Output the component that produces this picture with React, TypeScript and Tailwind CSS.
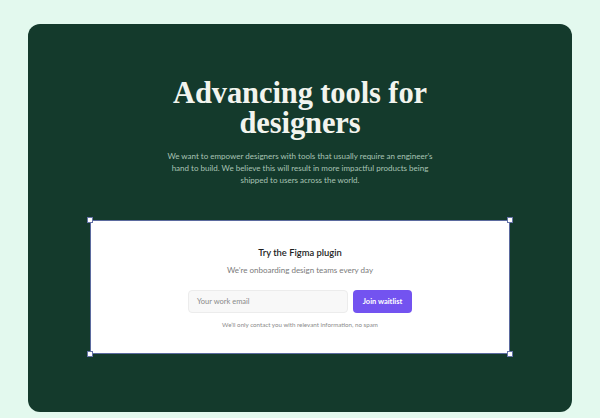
import React from "react";

function Handle({ pos }: { pos: string }) {
  return (
    <div
      className={`absolute w-[6px] h-[6px] bg-white border border-[#6673a8] ${pos}`}
    />
  );
}

export default function App() {
  return (
    <div className="w-[600px] h-[418px] bg-[#e3f9ee] pt-[24px] px-[28px] overflow-hidden">
      <div className="h-[388px] rounded-[12px] bg-[#143a2c] flex flex-col items-center pt-[54px]">
        <h1
          className="text-[30.5px] leading-[30px] font-bold text-center text-[#f2f4ee] tracking-[-0.1px]"
          style={{ fontFamily: '"Liberation Serif", serif' }}
        >
          <span className="block">Advancing tools for</span>
          <span className="block">designers</span>
        </h1>
        <p
          className="mt-[12px] text-center text-[8px] leading-[12px] text-[#a9c4b5] whitespace-nowrap"
          style={{ fontFamily: 'Lato, "Open Sans", sans-serif' }}
        >
          We want to empower designers with tools that usually require an engineer’s
          <br />
          hand to build. We believe this will result in more impactful products being
          <br />
          shipped to users across the world.
        </p>
        <div
          className="relative mt-[34px] w-[420px] h-[134px] bg-white border border-[#5b6a9e] flex flex-col items-center pt-[25px]"
          style={{ fontFamily: 'Lato, "Open Sans", sans-serif' }}
        >
          <Handle pos="-left-[4px] -top-[4px]" />
          <Handle pos="-right-[4px] -top-[4px]" />
          <Handle pos="-left-[4px] -bottom-[4px]" />
          <Handle pos="-right-[4px] -bottom-[4px]" />
          <div className="text-[9.4px] leading-[13px] font-semibold text-[#1e1e1e]">
            Try the Figma plugin
          </div>
          <div className="mt-[5px] text-[8px] leading-[12px] text-[#7a7a7a]">
            We’re onboarding design teams every day
          </div>
          <div className="mt-[14px] flex gap-[5px]">
            <div className="w-[160px] h-[23px] rounded-[4px] bg-[#f8f8f8] border border-[#ececec] flex items-center pl-[8px] text-[7.5px] text-[#8a8a8a]">
              Your work email
            </div>
            <div className="w-[59px] h-[23px] rounded-[4px] bg-[#7353f0] flex items-center justify-center text-[7.5px] font-bold text-white">
              Join waitlist
            </div>
          </div>
          <div className="mt-[7px] text-[6.2px] leading-[10px] text-[#8a8a8a]">
            We’ll only contact you with relevant information, no spam
          </div>
        </div>
      </div>
    </div>
  );
}
